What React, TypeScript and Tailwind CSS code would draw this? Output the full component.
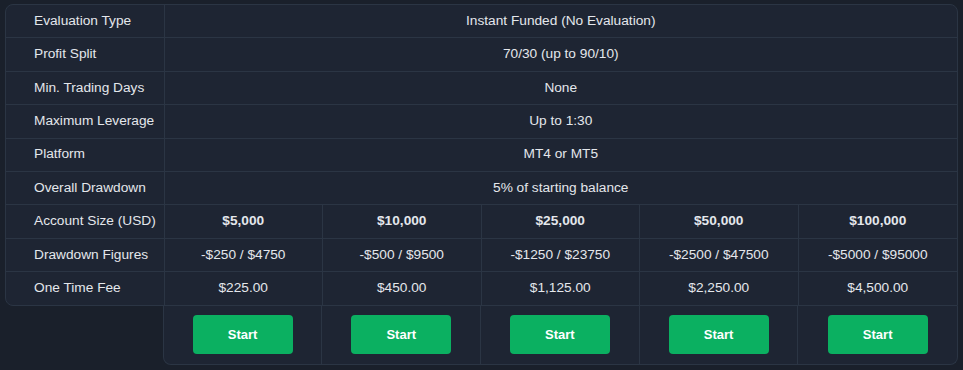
import React from 'react';

interface Plan {
  size: string;
  drawdown: string;
  fee: string;
}

const plans: Plan[] = [
  { size: '$5,000', drawdown: '-$250 / $4750', fee: '$225.00' },
  { size: '$10,000', drawdown: '-$500 / $9500', fee: '$450.00' },
  { size: '$25,000', drawdown: '-$1250 / $23750', fee: '$1,125.00' },
  { size: '$50,000', drawdown: '-$2500 / $47500', fee: '$2,250.00' },
  { size: '$100,000', drawdown: '-$5000 / $95000', fee: '$4,500.00' },
];

const features: [string, string][] = [
  ['Evaluation Type', 'Instant Funded (No Evaluation)'],
  ['Profit Split', '70/30 (up to 90/10)'],
  ['Min. Trading Days', 'None'],
  ['Maximum Leverage', 'Up to 1:30'],
  ['Platform', 'MT4 or MT5'],
  ['Overall Drawdown', '5% of starting balance'],
];

const App: React.FC = () => {
  return (
    <div
      className="min-h-screen bg-[#1a202b] px-[5px] pt-[4px] text-[13.7px] text-[#e4e7ec]"
      style={{ fontFamily: '"Liberation Sans", Arial, sans-serif' }}
    >
      {/* Main table */}
      <div className="border border-[#2b3544] bg-[#1e2533] rounded-tl-lg rounded-tr-lg rounded-bl-lg">
        {features.map(([label, value]) => (
          <div key={label} className="grid grid-cols-6 h-[33.4px] border-b border-[#2b3544]">
            <div className="flex items-center pl-[28px] border-r border-[#2b3544]">{label}</div>
            <div className="col-span-5 flex items-center justify-center">{value}</div>
          </div>
        ))}

        {/* Account size */}
        <div className="grid grid-cols-6 h-[33.4px] border-b border-[#2b3544]">
          <div className="flex items-center pl-[28px] border-r border-[#2b3544]">Account Size (USD)</div>
          {plans.map((p, i) => (
            <div
              key={p.size}
              className={`flex items-center justify-center font-bold ${i < 4 ? 'border-r border-[#2b3544]' : ''}`}
            >
              {p.size}
            </div>
          ))}
        </div>

        {/* Drawdown */}
        <div className="grid grid-cols-6 h-[33.4px] border-b border-[#2b3544]">
          <div className="flex items-center pl-[28px] border-r border-[#2b3544]">Drawdown Figures</div>
          {plans.map((p, i) => (
            <div
              key={p.size}
              className={`flex items-center justify-center ${i < 4 ? 'border-r border-[#2b3544]' : ''}`}
            >
              {p.drawdown}
            </div>
          ))}
        </div>

        {/* Fee */}
        <div className="grid grid-cols-6 h-[32.4px]">
          <div className="flex items-center pl-[28px] border-r border-[#2b3544]">One Time Fee</div>
          {plans.map((p, i) => (
            <div
              key={p.size}
              className={`flex items-center justify-center ${i < 4 ? 'border-r border-[#2b3544]' : ''}`}
            >
              {p.fee}
            </div>
          ))}
        </div>
      </div>

      {/* Buttons */}
      <div className="grid grid-cols-6">
        <div />
        <div className="col-span-5 grid grid-cols-5 h-[59px] -ml-px border-x border-b border-[#2b3544] bg-[#1e2533] rounded-b-lg">
          {plans.map((p, i) => (
            <div
              key={p.size}
              className={`flex items-center justify-center ${i < 4 ? 'border-r border-[#2b3544]' : ''}`}
            >
              <button className="w-[100px] h-[39px] rounded-[4px] bg-[#0bb061] text-white font-bold text-[13px]">
                Start
              </button>
            </div>
          ))}
        </div>
      </div>
    </div>
  );
};

export default App;
